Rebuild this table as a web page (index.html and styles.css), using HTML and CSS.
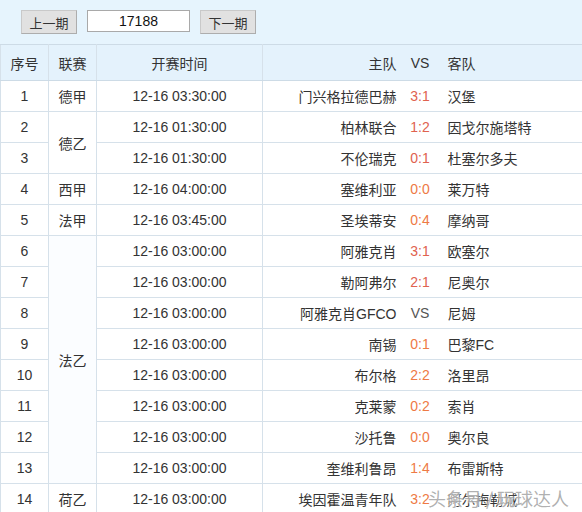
FILE: index.html
```html
<!DOCTYPE html>
<html lang="zh">
<head>
<meta charset="utf-8">
<link rel="stylesheet" href="styles.css">
</head>
<body>
<div class="page">
  <div class="toolbar">
    <button class="btn">上一期</button>
    <input class="issue" type="text" value="17188">
    <button class="btn">下一期</button>
  </div>
  <table class="matches">
    <colgroup>
      <col class="c-no"><col class="c-lg"><col class="c-time"><col class="c-home"><col class="c-score"><col class="c-away">
    </colgroup>
    <thead>
      <tr><th>序号</th><th>联赛</th><th>开赛时间</th><th class="home">主队</th><th class="score">VS</th><th class="away">客队</th></tr>
    </thead>
    <tbody>
      <tr><td>1</td><td class="lg">德甲</td><td>12-16 03:30:00</td><td class="home">门兴格拉德巴赫</td><td class="score red">3:1</td><td class="away">汉堡</td></tr>
      <tr><td>2</td><td class="lg" rowspan="2">德乙</td><td>12-16 01:30:00</td><td class="home">柏林联合</td><td class="score red">1:2</td><td class="away">因戈尔施塔特</td></tr>
      <tr><td>3</td><td>12-16 01:30:00</td><td class="home">不伦瑞克</td><td class="score red">0:1</td><td class="away">杜塞尔多夫</td></tr>
      <tr><td>4</td><td class="lg">西甲</td><td>12-16 04:00:00</td><td class="home">塞维利亚</td><td class="score org">0:0</td><td class="away">莱万特</td></tr>
      <tr><td>5</td><td class="lg">法甲</td><td>12-16 03:45:00</td><td class="home">圣埃蒂安</td><td class="score org">0:4</td><td class="away">摩纳哥</td></tr>
      <tr><td>6</td><td class="lg alt" rowspan="8">法乙</td><td>12-16 03:00:00</td><td class="home">阿雅克肖</td><td class="score red">3:1</td><td class="away">欧塞尔</td></tr>
      <tr><td>7</td><td>12-16 03:00:00</td><td class="home">勒阿弗尔</td><td class="score red">2:1</td><td class="away">尼奥尔</td></tr>
      <tr><td>8</td><td>12-16 03:00:00</td><td class="home">阿雅克肖GFCO</td><td class="score vs">VS</td><td class="away">尼姆</td></tr>
      <tr><td>9</td><td>12-16 03:00:00</td><td class="home">南锡</td><td class="score org">0:1</td><td class="away">巴黎FC</td></tr>
      <tr><td>10</td><td>12-16 03:00:00</td><td class="home">布尔格</td><td class="score org">2:2</td><td class="away">洛里昂</td></tr>
      <tr><td>11</td><td>12-16 03:00:00</td><td class="home">克莱蒙</td><td class="score org">0:2</td><td class="away">索肖</td></tr>
      <tr><td>12</td><td>12-16 03:00:00</td><td class="home">沙托鲁</td><td class="score org">0:0</td><td class="away">奥尔良</td></tr>
      <tr><td>13</td><td>12-16 03:00:00</td><td class="home">奎维利鲁昂</td><td class="score org">1:4</td><td class="away">布雷斯特</td></tr>
      <tr><td>14</td><td class="lg">荷乙</td><td>12-16 03:00:00</td><td class="home">埃因霍温青年队</td><td class="score org">3:2</td><td class="away">阿尔梅勒城</td></tr>
    </tbody>
  </table>
  <div class="watermark">头条号 / 玩球达人</div>
</div>
</body>
</html>
```
FILE: styles.css
```css
html, body {
  margin: 0;
  padding: 0;
  background: #ffffff;
}
.page {
  position: relative;
  width: 582px;
  height: 512px;
  overflow: hidden;
  font-family: "Liberation Sans", "Noto Sans CJK SC", sans-serif;
  color: #333333;
}
.toolbar {
  display: flex;
  align-items: flex-start;
  gap: 10px;
  height: 44px;
  box-sizing: border-box;
  padding: 10px 0 0 21px;
  background: #e6f4fd;
}
.btn {
  width: 56px;
  height: 24px;
  padding: 0;
  margin: 0;
  font-family: "Liberation Sans", "Noto Sans CJK SC", sans-serif;
  font-size: 13px;
  color: #333333;
  background: #e1e1e1;
  border: 1px solid #adadad;
  border-top-color: #c9c9c9;
  border-left-color: #c9c9c9;
}
.issue {
  width: 103px;
  height: 22px;
  box-sizing: border-box;
  margin: 0;
  padding: 0;
  text-align: center;
  font-family: "Liberation Sans", sans-serif;
  font-size: 14px;
  color: #111111;
  background: #ffffff;
  border: 1px solid #a9a9a9;
}
.matches {
  width: 582px;
  table-layout: fixed;
  border-collapse: collapse;
  font-size: 14px;
}
.c-no { width: 48px; }
.c-lg { width: 48px; }
.c-time { width: 166px; }
.c-home { width: 140px; }
.c-score { width: 35px; }
.c-away { width: 145px; }
.matches th {
  height: 35px;
  padding: 0;
  font-weight: normal;
  background: #e4f2fc;
  border-top: 1px solid #cddbe6;
  border-bottom: 1px solid #cddbe6;
  text-align: center;
  white-space: nowrap;
}
.matches td {
  height: 30px;
  padding: 0;
  text-align: center;
  white-space: nowrap;
  border-bottom: 1px solid #d6e1ea;
}
.matches th:nth-child(-n+3),
.matches td:not(.home):not(.score):not(.away) {
  border-right: 1px solid #d6e1ea;
}
.matches th:first-child,
.matches tbody tr td:first-child {
  border-left: 1px solid #d6e1ea;
}
.matches tbody tr td.lg.alt {
  background: #fbfdff;
}
.matches .home {
  text-align: right;
  padding-right: 6px;
  border-left: 1px solid #d6e1ea;
}
.matches .score {
  text-align: center;
  padding: 0;
}
.matches .away {
  text-align: left;
  padding-left: 10px;
}
.red { color: #e0624f; }
.org { color: #ee7a45; }
.vs { color: #555555; }
.watermark {
  position: absolute;
  left: 428px;
  top: 486px;
  font-size: 18px;
  line-height: 24px;
  color: rgba(110, 110, 110, 0.55);
  text-shadow: 0 0 2px #ffffff, 0 0 2px #ffffff;
  font-family: "Noto Sans CJK SC", sans-serif;
  white-space: nowrap;
}
```
